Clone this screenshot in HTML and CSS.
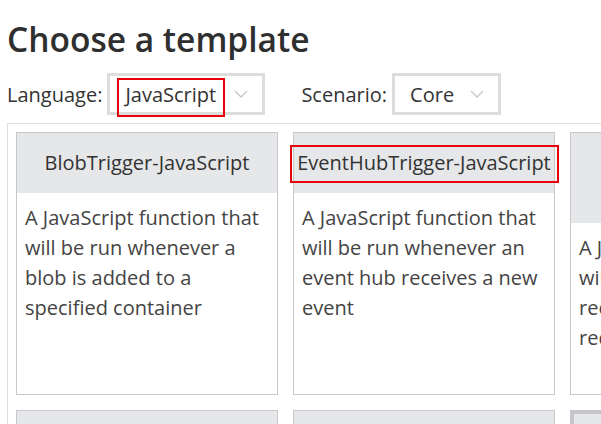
FILE: index.html
```html
<!DOCTYPE html>
<html lang="en">
<head>
<meta charset="utf-8">
<title>Choose a template</title>
<link rel="stylesheet" href="styles.css">
</head>
<body>
<h1 class="title">Choose a template</h1>
<div class="filters">
  <span class="filter-label">Language:</span>
  <div class="select select-language">
    <span class="select-value marked">JavaScript</span>
    <svg class="chevron" width="14" height="8" viewBox="0 0 14 8"><path d="M1 1 L7 7 L13 1" fill="none" stroke="#c8c8c8" stroke-width="1.3"/></svg>
  </div>
  <span class="filter-label filter-label-scenario">Scenario:</span>
  <div class="select select-scenario">
    <span class="select-value">Core</span>
    <svg class="chevron" width="14" height="8" viewBox="0 0 14 8"><path d="M1 1 L7 7 L13 1" fill="none" stroke="#c8c8c8" stroke-width="1.3"/></svg>
  </div>
</div>
<div class="panel">
  <div class="grid">
    <div class="card">
      <div class="card-header"><span class="card-title">BlobTrigger-JavaScript</span></div>
      <div class="card-body">A JavaScript function that will be run whenever a blob is added to a specified container</div>
    </div>
    <div class="card">
      <div class="card-header"><span class="card-title marked-title">EventHubTrigger-JavaScript</span></div>
      <div class="card-body">A JavaScript function that will be run whenever an event hub receives a new event</div>
    </div>
    <div class="card">
      <div class="card-header"><span class="card-title">GitHubWebHook-<br>JavaScript</span></div>
      <div class="card-body">A JavaScript function that will be run whenever it receives a webhook request</div>
    </div>
    <div class="card">
      <div class="card-header"><span class="card-title">QueueTrigger-JavaScript</span></div>
      <div class="card-body">A JavaScript function that will be run whenever a message is added to a queue</div>
    </div>
    <div class="card">
      <div class="card-header"><span class="card-title">TimerTrigger-JavaScript</span></div>
      <div class="card-body">A JavaScript function that will be run on a specified schedule</div>
    </div>
    <div class="card card-hover">
      <div class="card-header"><span class="card-title">HttpTrigger-JavaScript</span></div>
      <div class="card-body">A JavaScript function that will be run whenever it receives an HTTP request</div>
    </div>
  </div>
</div>
</body>
</html>
```

FILE: styles.css
```css
html, body {
  margin: 0;
  padding: 0;
  background: #ffffff;
  overflow: hidden;
}
body {
  padding-left: 7px;
  font-family: "Open Sans", "Noto Sans", sans-serif;
  color: #333333;
  width: 1200px;
}
.title {
  margin: 0;
  padding-top: 17px;
  font-size: 33.5px;
  line-height: 44px;
  font-weight: 600;
  color: #2f2f2f;
  letter-spacing: 0;
}
.filters {
  display: flex;
  align-items: center;
  margin-top: 12px;
  height: 42px;
}
.filter-label {
  font-size: 20px;
  color: #333333;
  margin-right: 5px;
}
.filter-label-scenario {
  margin-left: 36px;
}
.select {
  box-sizing: border-box;
  height: 42px;
  border: 3px solid #dddddd;
  display: flex;
  align-items: center;
  justify-content: space-between;
  padding: 0 14px 0 15px;
}
.select-language { width: 158px; }
.select-scenario { width: 109px; }
.select-value {
  font-size: 20px;
  color: #333333;
  position: relative;
}
.chevron { display: block; }
.marked::after {
  content: "";
  position: absolute;
  left: -8px;
  right: -9px;
  top: -3px;
  bottom: -9px;
  border: 2px solid #e8000b;
}
.panel {
  margin-top: 8px;
  border-top: 1px solid #dddddd;
  border-left: 1px solid #dddddd;
  padding: 8px 0 0 8px;
}
.grid {
  display: grid;
  grid-template-columns: repeat(3, 262px);
  gap: 15px;
}
.card {
  box-sizing: border-box;
  height: 263px;
  border: 1px solid #c8c9cc;
  background: #ffffff;
}
.card-header {
  background: #e6e7e9;
  padding: 15px 2px;
  text-align: center;
  font-size: 20px;
  line-height: 30px;
  color: #333333;
  white-space: nowrap;
}
.card-title { position: relative; }
.marked-title::after {
  content: "";
  position: absolute;
  left: -7px;
  right: -8px;
  top: -4px;
  bottom: -7px;
  border: 2px solid #e8000b;
}
.card-body {
  padding: 10px 8px;
  font-size: 20px;
  line-height: 30px;
  color: #444444;
}
.card-hover {
  border: 4px solid #c5c6c9;
}
```
